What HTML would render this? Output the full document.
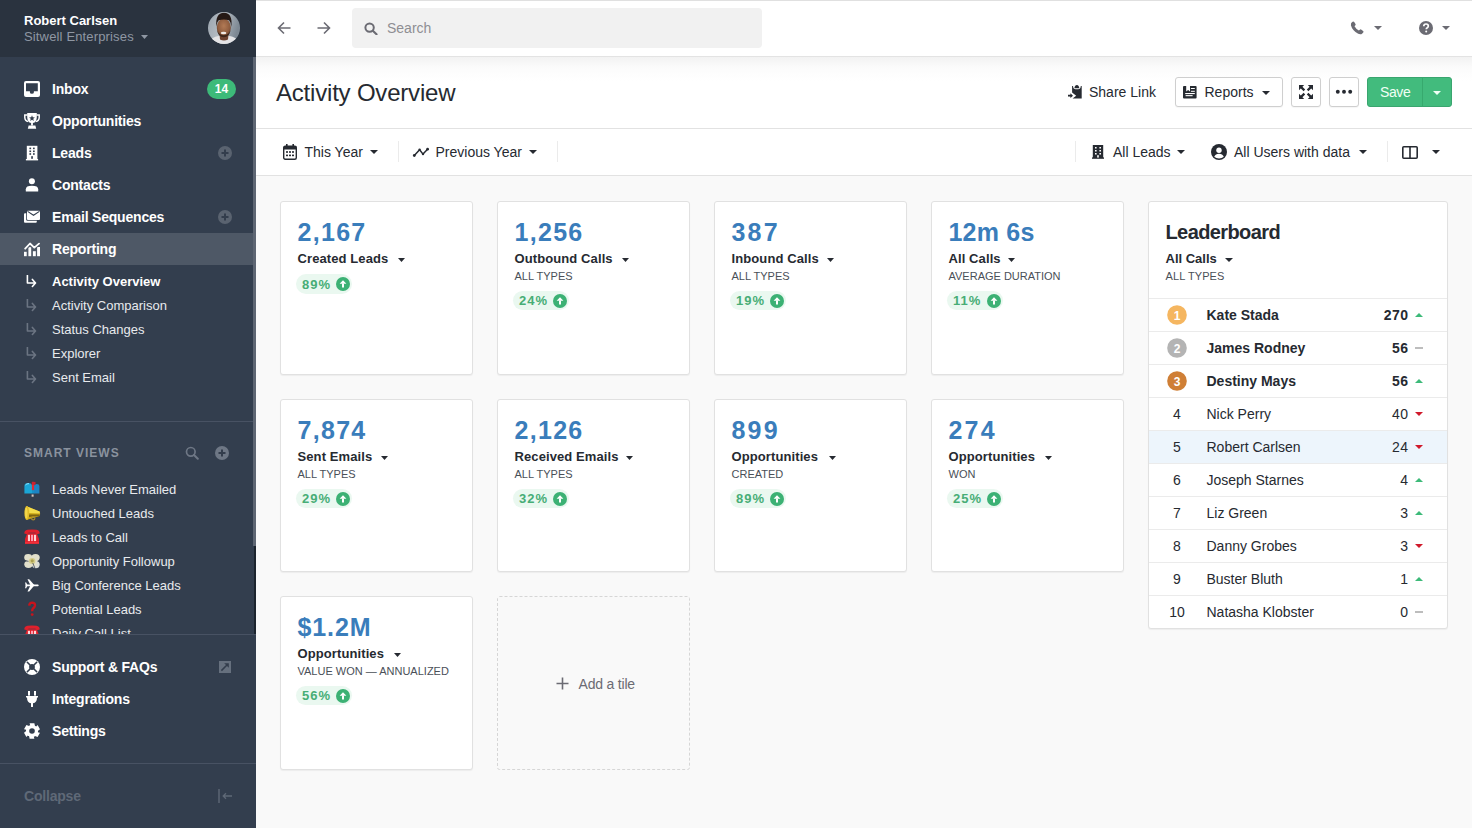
<!DOCTYPE html>
<html><head><meta charset="utf-8"><title>Activity Overview</title>
<style>
html,body{margin:0;padding:0;}
body{width:1472px;height:828px;overflow:hidden;position:relative;background:#f9f9f9;font-family:"Liberation Sans",sans-serif;-webkit-font-smoothing:antialiased;}
.t{position:absolute;white-space:nowrap;}
.r{position:absolute;display:block;}
</style></head><body>

<div class="r" style="left:0px;top:0px;width:256px;height:828px;background:#333e4e;"></div>
<div class="r" style="left:0px;top:0px;width:256px;height:57px;background:#2a333f;"></div>
<div class="t" style="left:24px;top:14.00px;font-size:13px;line-height:13px;color:#ffffff;font-weight:700;">Robert Carlsen</div>
<div class="t" style="left:24px;top:30.00px;font-size:13px;line-height:13px;color:#8f97a3;letter-spacing:0.15px;">Sitwell Enterprises</div>
<svg class="r" style="left:141px;top:35px" width="7" height="4" viewBox="0 0 7 4"><path d="M0 0H7L3.5 4Z" fill="#8f97a3"/></svg>
<svg class="r" style="left:208px;top:12px" width="32" height="32" viewBox="0 0 32 32">
<defs><clipPath id="av"><circle cx="16" cy="16" r="16"/></clipPath>
<linearGradient id="avbg" x1="0" y1="0" x2="1" y2="0.3"><stop offset="0" stop-color="#9aa4ae"/><stop offset="0.5" stop-color="#b4bcc3"/><stop offset="1" stop-color="#7d8893"/></linearGradient>
<radialGradient id="face" cx="50%" cy="40%" r="60%"><stop offset="0" stop-color="#b27a55"/><stop offset="0.7" stop-color="#8f5d3f"/><stop offset="1" stop-color="#5e3a26"/></radialGradient></defs>
<g clip-path="url(#av)">
<rect width="32" height="32" fill="url(#avbg)"/>
<path d="M0 32 C2 27 6 24.5 11 24 L21 24 C26 24.5 30 27 32 32Z" fill="#e4e4e6"/>
<path d="M11.5 22 L12 27.5 Q16 29.5 20 27.5 L20.5 22Z" fill="#6e4330"/>
<ellipse cx="15.8" cy="15.8" rx="7" ry="9.2" fill="url(#face)"/>
<path d="M8.4 15 Q7 1 16 0.8 Q25 1 23.3 15 Q22.8 9.5 21 8.2 Q16 6.6 10.8 8.2 Q9 9.5 8.4 15Z" fill="#251915"/>
<path d="M9.2 18.5 Q10 25 15.8 25.2 Q21.6 25 22.4 18.5 Q20.5 23.2 15.8 23.3 Q11.1 23.2 9.2 18.5Z" fill="#3d261a"/>
<ellipse cx="15.6" cy="21" rx="2.8" ry="1.2" fill="#efe9e4"/>
</g></svg>
<div class="r" style="left:0px;top:233px;width:253px;height:32px;background:#4e5866;"></div>
<div class="t" style="left:52px;top:82.15px;font-size:14px;line-height:14px;color:#ffffff;font-weight:700;letter-spacing:-0.2px;">Inbox</div>
<div class="t" style="left:52px;top:114.15px;font-size:14px;line-height:14px;color:#ffffff;font-weight:700;letter-spacing:-0.2px;">Opportunities</div>
<div class="t" style="left:52px;top:146.15px;font-size:14px;line-height:14px;color:#ffffff;font-weight:700;letter-spacing:-0.2px;">Leads</div>
<div class="t" style="left:52px;top:178.15px;font-size:14px;line-height:14px;color:#ffffff;font-weight:700;letter-spacing:-0.2px;">Contacts</div>
<div class="t" style="left:52px;top:210.15px;font-size:14px;line-height:14px;color:#ffffff;font-weight:700;letter-spacing:-0.2px;">Email Sequences</div>
<div class="t" style="left:52px;top:242.15px;font-size:14px;line-height:14px;color:#ffffff;font-weight:700;letter-spacing:-0.2px;">Reporting</div>
<svg class="r" style="left:24px;top:81px" width="16" height="16" viewBox="0 0 16 16"><rect x="0" y="0" width="16" height="16" rx="2" fill="#ffffff"/>
<path d="M2 2.2H13.8V10.2H9.9V11.3Q9.9 12.8 7.9 12.8Q5.9 12.8 5.9 11.3V10.2H2Z" fill="#333e4e"/></svg>
<svg class="r" style="left:24px;top:113px" width="16" height="16" viewBox="0 0 16 16"><path d="M3.2 0H12.8V4Q12.8 9.2 8.9 10.1V12.6H7.1V10.1Q3.2 9.2 3.2 4Z" fill="#ffffff"/>
<path d="M4.6 12.6H11.4L12.2 15.8H3.8Z" fill="#ffffff"/>
<path d="M3.5 1.9H0.8V4.4Q0.9 7.9 4.3 8.6" fill="none" stroke="#ffffff" stroke-width="1.5"/>
<path d="M12.5 1.9H15.2V4.4Q15.1 7.9 11.7 8.6" fill="none" stroke="#ffffff" stroke-width="1.5"/>
<path d="M8.00 2.30L8.79 4.31L10.95 4.44L9.28 5.82L9.82 7.91L8.00 6.75L6.18 7.91L6.72 5.82L5.05 4.44L7.21 4.31Z" fill="#333e4e"/></svg>
<svg class="r" style="left:24px;top:145px" width="16" height="16" viewBox="0 0 16 16"><rect x="2.8" y="0.8" width="10.6" height="14" fill="#ffffff"/>
<rect x="1.9" y="14" width="12.2" height="1.4" fill="#ffffff"/>
<rect x="5.4" y="2.6" width="1.7" height="1.6" fill="#333e4e"/><rect x="9" y="2.6" width="1.7" height="1.6" fill="#333e4e"/>
<rect x="5.4" y="5.5" width="1.7" height="1.6" fill="#333e4e"/><rect x="9" y="5.5" width="1.7" height="1.6" fill="#333e4e"/>
<rect x="5.4" y="8.2" width="1.7" height="1.6" fill="#333e4e"/><rect x="9" y="8.2" width="1.7" height="1.6" fill="#333e4e"/>
<rect x="7.2" y="11" width="1.7" height="3" rx="0.8" fill="#333e4e"/></svg>
<svg class="r" style="left:24px;top:177px" width="16" height="16" viewBox="0 0 16 16"><circle cx="7.9" cy="4.3" r="3" fill="#ffffff"/>
<path d="M1.8 14.4V12.2Q1.8 8.8 7.9 8.8Q14.2 8.8 14.2 12.2V14.4Z" fill="#ffffff"/></svg>
<svg class="r" style="left:24px;top:209px" width="16" height="16" viewBox="0 0 16 16"><rect x="0" y="4.2" width="12.8" height="9.6" rx="1" fill="#ffffff"/>
<rect x="2.2" y="0.9" width="14.6" height="10.9" rx="1.2" fill="#333e4e"/>
<rect x="3" y="1.7" width="13" height="9.3" rx="1" fill="#ffffff"/>
<path d="M3.6 2.4L9.5 6.3L15.4 2.4" fill="none" stroke="#333e4e" stroke-width="1.1"/></svg>
<svg class="r" style="left:24px;top:241px" width="16" height="16" viewBox="0 0 16 16"><rect x="0" y="10.8" width="2.7" height="4.4" fill="#ffffff"/>
<rect x="4.4" y="6.2" width="2.8" height="9" fill="#ffffff"/>
<rect x="8.9" y="10.2" width="2.9" height="5" fill="#ffffff"/>
<rect x="13.1" y="6" width="2.9" height="9.2" fill="#ffffff"/>
<path d="M1.2 7.7L6 2.5L10.3 6.6L15 2.6" fill="none" stroke="#4e5866" stroke-width="3.4" stroke-linejoin="round"/>
<path d="M1.2 7.7L6 2.5L10.3 6.6L15 2.6" fill="none" stroke="#ffffff" stroke-width="1.8" stroke-linecap="round" stroke-linejoin="round"/></svg>
<div class="r" style="left:207px;top:79px;width:29px;height:20px;background:#3dba79;border-radius:10px;"></div>
<div class="t" style="left:21.5px;width:400px;text-align:center;top:83.34px;font-size:12px;line-height:12px;color:#ffffff;font-weight:700;">14</div>
<svg class="r" style="left:218px;top:146px" width="14" height="14" viewBox="0 0 14 14"><circle cx="7" cy="7" r="7" fill="#5a6370"/><path d="M7 3.5V10.5M3.5 7H10.5" stroke="#333d4c" stroke-width="2"/></svg>
<svg class="r" style="left:218px;top:210px" width="14" height="14" viewBox="0 0 14 14"><circle cx="7" cy="7" r="7" fill="#5a6370"/><path d="M7 3.5V10.5M3.5 7H10.5" stroke="#333d4c" stroke-width="2"/></svg>
<div class="t" style="left:52px;top:275.00px;font-size:13px;line-height:13px;color:#ffffff;font-weight:700;">Activity Overview</div>
<svg class="r" style="left:26px;top:275px" width="11" height="13" viewBox="0 0 11 13"><path d="M1.4 0.4V8H9.3M6.4 4.4L9.5 8L6.4 11.5" fill="none" stroke="#ffffff" stroke-width="1.6" stroke-linecap="round" stroke-linejoin="round"/></svg>
<div class="t" style="left:52px;top:299.00px;font-size:13px;line-height:13px;color:#e8eaed;">Activity Comparison</div>
<svg class="r" style="left:26px;top:299px" width="11" height="13" viewBox="0 0 11 13"><path d="M1.4 0.4V8H9.3M6.4 4.4L9.5 8L6.4 11.5" fill="none" stroke="#6b7482" stroke-width="1.6" stroke-linecap="round" stroke-linejoin="round"/></svg>
<div class="t" style="left:52px;top:323.00px;font-size:13px;line-height:13px;color:#e8eaed;">Status Changes</div>
<svg class="r" style="left:26px;top:323px" width="11" height="13" viewBox="0 0 11 13"><path d="M1.4 0.4V8H9.3M6.4 4.4L9.5 8L6.4 11.5" fill="none" stroke="#6b7482" stroke-width="1.6" stroke-linecap="round" stroke-linejoin="round"/></svg>
<div class="t" style="left:52px;top:347.00px;font-size:13px;line-height:13px;color:#e8eaed;">Explorer</div>
<svg class="r" style="left:26px;top:347px" width="11" height="13" viewBox="0 0 11 13"><path d="M1.4 0.4V8H9.3M6.4 4.4L9.5 8L6.4 11.5" fill="none" stroke="#6b7482" stroke-width="1.6" stroke-linecap="round" stroke-linejoin="round"/></svg>
<div class="t" style="left:52px;top:371.00px;font-size:13px;line-height:13px;color:#e8eaed;">Sent Email</div>
<svg class="r" style="left:26px;top:371px" width="11" height="13" viewBox="0 0 11 13"><path d="M1.4 0.4V8H9.3M6.4 4.4L9.5 8L6.4 11.5" fill="none" stroke="#6b7482" stroke-width="1.6" stroke-linecap="round" stroke-linejoin="round"/></svg>
<div class="r" style="left:0px;top:421px;width:253px;height:1px;background:#485263;"></div>
<div class="t" style="left:24px;top:446.84px;font-size:12px;line-height:12px;color:#8a929e;font-weight:700;letter-spacing:1.0px;">SMART VIEWS</div>
<svg class="r" style="left:185px;top:446px" width="14" height="14" viewBox="0 0 14 14"><circle cx="5.8" cy="5.8" r="4.3" fill="none" stroke="#6e7785" stroke-width="1.7"/><path d="M9 9L12.8 12.8" stroke="#6e7785" stroke-width="2" stroke-linecap="round"/></svg>
<svg class="r" style="left:215px;top:446px" width="14" height="14" viewBox="0 0 14 14"><circle cx="7" cy="7" r="7" fill="#6e7785"/><path d="M7 3.5V10.5M3.5 7H10.5" stroke="#333d4c" stroke-width="2"/></svg>
<div class="r" style="left:0;top:470px;width:253px;height:164px;overflow:hidden;">
<div class="t" style="left:52px;top:13.00px;font-size:13px;line-height:13px;color:#e8eaed;">Leads Never Emailed</div>
<div class="t" style="left:52px;top:37.00px;font-size:13px;line-height:13px;color:#e8eaed;">Untouched Leads</div>
<div class="t" style="left:52px;top:61.00px;font-size:13px;line-height:13px;color:#e8eaed;">Leads to Call</div>
<div class="t" style="left:52px;top:85.00px;font-size:13px;line-height:13px;color:#e8eaed;">Opportunity Followup</div>
<div class="t" style="left:52px;top:109.00px;font-size:13px;line-height:13px;color:#e8eaed;">Big Conference Leads</div>
<div class="t" style="left:52px;top:133.00px;font-size:13px;line-height:13px;color:#e8eaed;">Potential Leads</div>
<div class="t" style="left:52px;top:157.00px;font-size:13px;line-height:13px;color:#e8eaed;">Daily Call List</div>
<svg class="r" style="left:24px;top:11px" width="16" height="16" viewBox="0 0 16 16"><path d="M0.4 5Q0.4 1.9 4.2 1.9Q8.1 1.9 8.1 5V12.5H0.4Z" fill="#1ba6d6"/><path d="M10 5Q10 2.9 12.7 2.9Q15.4 2.9 15.4 5V12.5H10Z" fill="#1d84c4"/><rect x="8" y="2.5" width="2.2" height="10" fill="#1790c8"/><path d="M1.5 4Q2.5 2.6 5 2.6" fill="none" stroke="#8fe3ff" stroke-width="1"/>
<rect x="7.9" y="0.9" width="2.2" height="8.2" fill="#de2b38"/><rect x="7.9" y="0.9" width="3.6" height="2.9" fill="#cf2030"/><rect x="7.6" y="13.5" width="2" height="2.2" fill="#d9c8bf"/></svg>
<svg class="r" style="left:24px;top:35px" width="17" height="16" viewBox="0 0 17 16"><path d="M2.6 1.2L15.6 6.6Q16.6 8.8 15.6 11L2.6 15Z" fill="#c9a415"/><path d="M2.6 1.2L15.6 6.6Q16 7.8 15.6 8.6L3 8Z" fill="#f3dc4a"/><path d="M5 9.5L15.6 9.4Q16 10.2 15.6 11L5 12Z" fill="#7d6410"/><ellipse cx="2.8" cy="8.1" rx="2.4" ry="7" fill="#e2bd2a"/><ellipse cx="2.3" cy="8.1" rx="1.2" ry="5.5" fill="#f4d74a"/><circle cx="9.2" cy="13.2" r="1.7" fill="none" stroke="#a88a2a" stroke-width="1.1"/></svg>
<svg class="r" style="left:24px;top:59px" width="16" height="16" viewBox="0 0 16 16"><path d="M0.3 4.6Q0.2 1.2 3.5 0.8Q8 0 12.5 0.8Q15.8 1.2 15.7 4.6L12.8 5.2L11.5 3.8H4.5L3.2 5.2Z" fill="#e0202c"/><path d="M3.2 4.2H12.8L15 10V14.7H1V10Z" fill="#e0202c"/><rect x="1" y="13" width="14" height="1.7" fill="#f0303a"/>
<rect x="3.9" y="5.8" width="2.1" height="6.3" fill="#ffd6d6"/><rect x="7" y="5.8" width="2.1" height="6.3" fill="#ff9fb0"/><rect x="10" y="5.8" width="2.1" height="6.3" fill="#ffd6d6"/></svg>
<svg class="r" style="left:24px;top:83px" width="16" height="16" viewBox="0 0 16 16"><g fill="#e2e0cc"><ellipse cx="4.2" cy="4.5" rx="4" ry="3.4"/><ellipse cx="11.5" cy="4.6" rx="4.2" ry="3.6"/><ellipse cx="4.5" cy="11.3" rx="4.2" ry="3.6"/><ellipse cx="11.8" cy="11.6" rx="3.9" ry="3.6" fill="#d8dcd8"/><rect x="3" y="3" width="10" height="10"/></g><ellipse cx="8.2" cy="8" rx="3.2" ry="3" fill="#d5cd8a"/><circle cx="8.2" cy="7.8" r="1.6" fill="#aaa050"/><path d="M8.8 10L11 15.5" stroke="#3a4350" stroke-width="0.8"/><path d="M0 7.6L4.5 8.3" stroke="#3a4350" stroke-width="0.8"/></svg>
<svg class="r" style="left:24px;top:108px" width="16" height="16" viewBox="0 0 16 16"><path d="M1.5 6.6Q8 6.6 14 6.6Q15.8 7.3 14 8.2H1.5Z" fill="#fff"/><path d="M6.5 7.3L3.5 13.5H5.2L10.5 7.3Z" fill="#fff"/><path d="M6.5 7.3L3.5 1.2H5.2L10.5 7.3Z" fill="#fff"/><path d="M1 4.5H2.2L3.6 7.3H1.8Z" fill="#fff"/><path d="M1 10.2H2.2L3.6 7.6H1.8Z" fill="#fff"/></svg>
<svg class="r" style="left:24px;top:131px" width="16" height="16" viewBox="0 0 16 16"><path d="M5.2 4.6Q5.5 1.6 8.2 1.6Q11.2 1.7 11 4.4Q10.8 6.3 8.9 7.6Q8.1 8.4 8.2 10.2" fill="none" stroke="#c8141c" stroke-width="2.4"/><circle cx="8.2" cy="13.6" r="1.4" fill="#c8141c"/></svg>
<svg class="r" style="left:24px;top:155px" width="16" height="16" viewBox="0 0 16 16"><path d="M0.3 4.6Q0.2 1.2 3.5 0.8Q8 0 12.5 0.8Q15.8 1.2 15.7 4.6L12.8 5.2L11.5 3.8H4.5L3.2 5.2Z" fill="#e0202c"/><path d="M3.2 4.2H12.8L15 10V14.7H1V10Z" fill="#e0202c"/><rect x="1" y="13" width="14" height="1.7" fill="#f0303a"/>
<rect x="3.9" y="5.8" width="2.1" height="6.3" fill="#ffd6d6"/><rect x="7" y="5.8" width="2.1" height="6.3" fill="#ff9fb0"/><rect x="10" y="5.8" width="2.1" height="6.3" fill="#ffd6d6"/></svg>
</div>
<div class="r" style="left:0px;top:634px;width:256px;height:1px;background:#485263;"></div>
<div class="r" style="left:253px;top:57px;width:3px;height:489px;background:#5e6673;"></div>
<div class="r" style="left:254px;top:546px;width:2px;height:88px;background:#1c242e;"></div>
<div class="t" style="left:52px;top:660.15px;font-size:14px;line-height:14px;color:#ffffff;font-weight:700;letter-spacing:-0.2px;">Support &amp; FAQs</div>
<div class="t" style="left:52px;top:692.15px;font-size:14px;line-height:14px;color:#ffffff;font-weight:700;letter-spacing:-0.2px;">Integrations</div>
<div class="t" style="left:52px;top:724.15px;font-size:14px;line-height:14px;color:#ffffff;font-weight:700;letter-spacing:-0.2px;">Settings</div>
<svg class="r" style="left:24px;top:659px" width="16" height="16" viewBox="0 0 16 16"><circle cx="8" cy="8" r="8" fill="#ffffff"/><circle cx="8" cy="8" r="2.9" fill="#333e4e"/>
<path d="M3.3 3.3L5.8 5.8M12.7 3.3L10.2 5.8M3.3 12.7L5.8 10.2M12.7 12.7L10.2 10.2" stroke="#333e4e" stroke-width="1.6" stroke-linecap="round"/></svg>
<svg class="r" style="left:24px;top:691px" width="16" height="16" viewBox="0 0 16 16"><rect x="4" y="0" width="2" height="4.6" fill="#ffffff"/><rect x="10" y="0" width="2" height="4.6" fill="#ffffff"/>
<path d="M2 5H14V6.4H13Q13 11.5 9 12.2H7Q3 11.5 3 6.4H2Z" fill="#ffffff"/><rect x="7" y="11.5" width="2" height="4.5" rx="0.6" fill="#ffffff"/></svg>
<svg class="r" style="left:24px;top:723px" width="16" height="16" viewBox="0 0 16 16"><path d="M5.60 0.16L10.40 0.16L10.90 2.98L11.96 3.76L13.59 2.00L15.99 6.16L13.80 8.00L13.65 9.30L15.99 9.84L13.59 14.00L10.90 13.02L9.70 13.55L10.40 15.84L5.60 15.84L5.10 13.02L4.04 12.24L2.41 14.00L0.01 9.84L2.20 8.00L2.35 6.70L0.01 6.16L2.41 2.00L5.10 2.98L6.30 2.45Z" fill="#ffffff"/><circle cx="8" cy="8" r="6" fill="#ffffff"/><circle cx="8" cy="8" r="2.8" fill="#333e4e"/></svg>
<svg class="r" style="left:219px;top:661px" width="12" height="12" viewBox="0 0 12 12"><rect width="12" height="12" fill="#66707e"/><path d="M2.4 9.6L8.2 3.8" stroke="#333d4c" stroke-width="1.5"/><path d="M5.2 2.2H9.8V6.8Z" fill="#333d4c"/></svg>
<div class="r" style="left:0px;top:763px;width:256px;height:1px;background:#485263;"></div>
<div class="t" style="left:24px;top:789.15px;font-size:14px;line-height:14px;color:#5f6977;font-weight:700;letter-spacing:-0.2px;">Collapse</div>
<svg class="r" style="left:218px;top:789px" width="14" height="14" viewBox="0 0 14 14"><path d="M1 0V14" stroke="#5f6977" stroke-width="1.4"/><path d="M5.2 7H14M8 4.3L5.2 7L8 9.7" fill="none" stroke="#5f6977" stroke-width="1.3"/></svg>
<div class="r" style="left:256px;top:0px;width:1216px;height:56px;background:#fff;"></div>
<div class="r" style="left:256px;top:0px;width:1216px;height:1px;background:#e0e0e0;"></div>
<div class="r" style="left:256px;top:56px;width:1216px;height:1px;background:#e3e3e3;"></div>
<svg class="r" style="left:277px;top:21px" width="14" height="14" viewBox="0 0 14 14"><path d="M13.5 7H1.5M7 1.5L1.5 7L7 12.5" fill="none" stroke="#6b6b73" stroke-width="1.6"/></svg>
<svg class="r" style="left:317px;top:21px" width="14" height="14" viewBox="0 0 14 14"><path d="M0.5 7H12.5M7 1.5L12.5 7L7 12.5" fill="none" stroke="#6b6b73" stroke-width="1.6"/></svg>
<div class="r" style="left:352px;top:8px;width:410px;height:40px;background:#f1f1f1;border-radius:4px;"></div>
<svg class="r" style="left:364px;top:22px" width="14" height="13" viewBox="0 0 14 13"><circle cx="5.6" cy="5.6" r="4.2" fill="none" stroke="#6b6b73" stroke-width="2"/><path d="M8.8 8.8L12.5 12.2" stroke="#6b6b73" stroke-width="2.2" stroke-linecap="round"/></svg>
<div class="t" style="left:387px;top:21.15px;font-size:14px;line-height:14px;color:#8e8e93;">Search</div>
<svg class="r" style="left:1350px;top:21px" width="15" height="14" viewBox="0 0 15 14"><path d="M2.6 0.8Q0.6 1.8 0.9 4.2Q2.3 9.5 8.2 12.8Q10.8 13.9 12.3 12.4L13.4 11.2Q13.9 10.5 13.1 9.9L11.1 8.5Q10.4 8.1 9.8 8.7L8.9 9.6Q6 8 4.5 5.3L5.4 4.3Q5.9 3.7 5.5 3L4.2 1Q3.6 0.3 2.6 0.8Z" fill="#6b6b73"/></svg>
<svg class="r" style="left:1374px;top:26px" width="8" height="4" viewBox="0 0 8 4"><path d="M0 0H8L4.0 4Z" fill="#6b6b73"/></svg>
<svg class="r" style="left:1419px;top:21px" width="14" height="14" viewBox="0 0 14 14"><circle cx="7" cy="7" r="7" fill="#6b6b73"/><path d="M4.8 5.3Q4.8 3 7 3Q9.3 3 9.3 5Q9.3 6.2 8 6.9Q7.3 7.3 7.3 8.2" fill="none" stroke="#fff" stroke-width="1.7"/><circle cx="7.2" cy="10.6" r="1" fill="#fff"/></svg>
<svg class="r" style="left:1442px;top:26px" width="8" height="4" viewBox="0 0 8 4"><path d="M0 0H8L4.0 4Z" fill="#6b6b73"/></svg>
<div class="r" style="left:256px;top:57px;width:1216px;height:71px;background:linear-gradient(#f2f2f2 0px,#fbfbfb 10px,#ffffff 24px);"></div>
<div class="r" style="left:256px;top:128px;width:1216px;height:1px;background:#e2e2e2;"></div>
<div class="t" style="left:276px;top:80.68px;font-size:24px;line-height:24px;color:#262a31;letter-spacing:-0.2px;">Activity Overview</div>
<svg class="r" style="left:1066px;top:84px" width="16" height="16" viewBox="0 0 16 16"><path d="M6.1 2 H7 Q7.3 5.2 9.5 5.2 H12.2 Q14.6 5.2 14.8 2 H15.7 V14.6 H6.6 L10.2 11.65 L6.1 8.5 Z" fill="#262a31"/>
<path d="M8.4 4.2 Q8.6 1 10.85 0.9 Q13.1 1 13.3 4.2 Z" fill="#262a31"/>
<path d="M2 11.65H5.2" stroke="#262a31" stroke-width="1.8"/><path d="M4.4 9.3L7 11.65L4.4 14Z" fill="#262a31"/></svg>
<div class="t" style="left:1089px;top:85.15px;font-size:14px;line-height:14px;color:#262a31;">Share Link</div>
<div class="r" style="left:1175px;top:77px;width:106px;height:28px;border:1px solid #cfcfcf;border-radius:3px;background:#fff;box-shadow:0 1px 1px rgba(0,0,0,0.04);"></div>
<svg class="r" style="left:1183px;top:86px" width="14" height="13" viewBox="0 0 14 13"><rect x="0" y="0" width="13.6" height="12.6" rx="1" fill="#262a31"/>
<path d="M3.2 0H7V5.4L5.1 4.1L3.2 5.4Z" fill="#fff"/>
<g fill="#fff"><rect x="7.9" y="2" width="3.9" height="1"/><rect x="7.9" y="4.8" width="3.9" height="1"/><rect x="2.2" y="7" width="9.6" height="1.1"/><rect x="2.6" y="9.1" width="7" height="1.1"/></g></svg>
<div class="t" style="left:1204.5px;top:85.15px;font-size:14px;line-height:14px;color:#262a31;">Reports</div>
<svg class="r" style="left:1262px;top:91px" width="8" height="4" viewBox="0 0 8 4"><path d="M0 0H8L4.0 4Z" fill="#262a31"/></svg>
<div class="r" style="left:1291px;top:77px;width:28px;height:28px;border:1px solid #cfcfcf;border-radius:3px;background:#fff;box-shadow:0 1px 1px rgba(0,0,0,0.04);"></div>
<svg class="r" style="left:1299px;top:85px" width="14" height="14" viewBox="0 0 14 14"><path d="M1.6 1.6L5.4 5.4M12.4 1.6L8.6 5.4M1.6 12.4L5.4 8.6M12.4 12.4L8.6 8.6" stroke="#262a31" stroke-width="2.2"/>
<path d="M0 0H5.2L0 5.2Z M14 0H8.8L14 5.2Z M0 14H5.2L0 8.8Z M14 14H8.8L14 8.8Z" fill="#262a31"/></svg>
<div class="r" style="left:1329px;top:77px;width:28px;height:28px;border:1px solid #cfcfcf;border-radius:3px;background:#fff;box-shadow:0 1px 1px rgba(0,0,0,0.04);"></div>
<svg class="r" style="left:1335px;top:89px" width="18" height="5" viewBox="0 0 18 5"><circle cx="2.8" cy="2.7" r="1.95" fill="#262a31"/><circle cx="9" cy="2.7" r="1.95" fill="#262a31"/><circle cx="15.2" cy="2.7" r="1.95" fill="#262a31"/></svg>
<div class="r" style="left:1367px;top:77px;width:83px;height:28px;background:#42bb7d;border:1px solid #3aa56f;border-radius:3px;"></div>
<div class="r" style="left:1422px;top:77px;width:1px;height:30px;background:#37a96e;"></div>
<div class="t" style="left:1380px;top:85.15px;font-size:14px;line-height:14px;color:#f0fff5;letter-spacing:-0.4px;">Save</div>
<svg class="r" style="left:1433px;top:91px" width="8" height="4" viewBox="0 0 8 4"><path d="M0 0H8L4.0 4Z" fill="#f0fff5"/></svg>
<div class="r" style="left:256px;top:129px;width:1216px;height:46px;background:#fff;"></div>
<div class="r" style="left:256px;top:175px;width:1216px;height:1px;background:#e2e2e2;"></div>
<svg class="r" style="left:283px;top:144px" width="14" height="16" viewBox="0 0 14 16"><rect x="0.7" y="2.3" width="12.6" height="13" rx="1.5" fill="none" stroke="#262a31" stroke-width="1.4"/>
<rect x="0.7" y="2.3" width="12.6" height="3.2" fill="#262a31"/><rect x="3" y="0" width="1.6" height="3.5" fill="#262a31"/><rect x="9.4" y="0" width="1.6" height="3.5" fill="#262a31"/>
<g fill="#262a31"><rect x="3" y="7.2" width="2" height="1.6"/><rect x="6" y="7.2" width="2" height="1.6"/><rect x="9" y="7.2" width="2" height="1.6"/>
<rect x="3" y="10.6" width="2" height="1.6"/><rect x="6" y="10.6" width="2" height="1.6"/><rect x="9" y="10.6" width="2" height="1.6"/></g></svg>
<div class="t" style="left:304.5px;top:145.15px;font-size:14px;line-height:14px;color:#262a31;">This Year</div>
<svg class="r" style="left:370px;top:150px" width="8" height="4" viewBox="0 0 8 4"><path d="M0 0H8L4.0 4Z" fill="#262a31"/></svg>
<div class="r" style="left:398px;top:141px;width:1px;height:21px;background:#ebebeb;"></div>
<svg class="r" style="left:412px;top:146px" width="18" height="12" viewBox="0 0 18 12"><path d="M2.3 9.5L7.6 3.7L11 8.1L15.6 3.2" fill="none" stroke="#262a31" stroke-width="1.5" stroke-linejoin="round"/><g fill="#262a31"><circle cx="2.3" cy="9.5" r="1.4"/><circle cx="7.6" cy="3.8" r="1.2"/><circle cx="11" cy="8.1" r="1.2"/><circle cx="15.6" cy="3.2" r="1.4"/></g></svg>
<div class="t" style="left:435.5px;top:145.15px;font-size:14px;line-height:14px;color:#262a31;">Previous Year</div>
<svg class="r" style="left:529px;top:150px" width="8" height="4" viewBox="0 0 8 4"><path d="M0 0H8L4.0 4Z" fill="#262a31"/></svg>
<div class="r" style="left:557px;top:141px;width:1px;height:21px;background:#ebebeb;"></div>
<div class="r" style="left:1075px;top:141px;width:1px;height:21px;background:#ebebeb;"></div>
<svg class="r" style="left:1092px;top:145px" width="12" height="15" viewBox="0 0 12 15"><rect x="0.8" y="0" width="10.4" height="13" fill="#262a31"/><rect x="0" y="12.4" width="12" height="1.4" fill="#262a31"/>
<g fill="#fff"><rect x="3" y="2" width="1.6" height="1.5"/><rect x="7.4" y="2" width="1.6" height="1.5"/><rect x="3" y="5" width="1.6" height="1.5"/><rect x="7.4" y="5" width="1.6" height="1.5"/><rect x="3" y="8" width="1.6" height="1.5"/><rect x="7.4" y="8" width="1.6" height="1.5"/><rect x="5.2" y="10.2" width="1.6" height="2.4"/></g></svg>
<div class="t" style="left:1113px;top:145.15px;font-size:14px;line-height:14px;color:#262a31;">All Leads</div>
<svg class="r" style="left:1177px;top:150px" width="8" height="4" viewBox="0 0 8 4"><path d="M0 0H8L4.0 4Z" fill="#262a31"/></svg>
<svg class="r" style="left:1211px;top:144px" width="16" height="16" viewBox="0 0 16 16"><circle cx="8" cy="8" r="8" fill="#262a31"/><circle cx="8" cy="6.2" r="2.7" fill="#fff"/><path d="M3.2 12.8Q4.5 9.8 8 9.8Q11.5 9.8 12.8 12.8Q10.8 14.6 8 14.6Q5.2 14.6 3.2 12.8Z" fill="#fff"/></svg>
<div class="t" style="left:1234px;top:145.15px;font-size:14px;line-height:14px;color:#262a31;">All Users with data</div>
<svg class="r" style="left:1359px;top:150px" width="8" height="4" viewBox="0 0 8 4"><path d="M0 0H8L4.0 4Z" fill="#262a31"/></svg>
<div class="r" style="left:1387px;top:141px;width:1px;height:21px;background:#ebebeb;"></div>
<svg class="r" style="left:1402px;top:146px" width="16" height="13" viewBox="0 0 16 13"><rect x="0.8" y="0.8" width="14.4" height="11.4" rx="1" fill="none" stroke="#262a31" stroke-width="1.6"/><rect x="7.2" y="0.8" width="1.6" height="11.4" fill="#262a31"/></svg>
<svg class="r" style="left:1432px;top:150px" width="8" height="4" viewBox="0 0 8 4"><path d="M0 0H8L4.0 4Z" fill="#262a31"/></svg>
<div class="r" style="left:280px;top:201px;width:191px;height:172px;background:#fff;border:1px solid #e1e1e1;border-radius:3px;box-shadow:0 1px 1px rgba(0,0,0,0.05);"></div>
<div class="t" style="left:297.5px;top:219.84px;font-size:25px;line-height:25px;color:#3a7dbb;font-weight:700;letter-spacing:1.3px;">2,167</div>
<div class="t" style="left:297.5px;top:252.00px;font-size:13px;line-height:13px;color:#262a31;font-weight:700;letter-spacing:0.1px;">Created Leads</div>
<svg class="r" style="left:398px;top:258.3px" width="7" height="4" viewBox="0 0 7 4"><path d="M0 0H7L3.5 4Z" fill="#262a31"/></svg>
<div class="r" style="left:296px;top:274px;width:56px;height:19.5px;background:#eaf8f0;border-radius:10px;"></div>
<div class="t" style="left:302px;top:277.50px;font-size:13px;line-height:13px;color:#47ad76;font-weight:700;letter-spacing:1.0px;">89%</div>
<svg class="r" style="left:336px;top:277px" width="14" height="14" viewBox="0 0 14 14"><circle cx="7" cy="7" r="7" fill="#3cb174"/><path d="M7 3.2L3.6 6.8H10.4Z" fill="#fff"/><rect x="6" y="6.5" width="2" height="4" fill="#fff"/></svg>
<div class="r" style="left:497px;top:201px;width:191px;height:172px;background:#fff;border:1px solid #e1e1e1;border-radius:3px;box-shadow:0 1px 1px rgba(0,0,0,0.05);"></div>
<div class="t" style="left:514.5px;top:219.84px;font-size:25px;line-height:25px;color:#3a7dbb;font-weight:700;letter-spacing:1.3px;">1,256</div>
<div class="t" style="left:514.5px;top:252.00px;font-size:13px;line-height:13px;color:#262a31;font-weight:700;letter-spacing:0.1px;">Outbound Calls</div>
<svg class="r" style="left:621.5px;top:258.3px" width="7" height="4" viewBox="0 0 7 4"><path d="M0 0H7L3.5 4Z" fill="#262a31"/></svg>
<div class="t" style="left:514.5px;top:270.69px;font-size:11px;line-height:11px;color:#4a4f57;">ALL TYPES</div>
<div class="r" style="left:513px;top:290.5px;width:56px;height:19.5px;background:#eaf8f0;border-radius:10px;"></div>
<div class="t" style="left:519px;top:294.00px;font-size:13px;line-height:13px;color:#47ad76;font-weight:700;letter-spacing:1.0px;">24%</div>
<svg class="r" style="left:553px;top:293.5px" width="14" height="14" viewBox="0 0 14 14"><circle cx="7" cy="7" r="7" fill="#3cb174"/><path d="M7 3.2L3.6 6.8H10.4Z" fill="#fff"/><rect x="6" y="6.5" width="2" height="4" fill="#fff"/></svg>
<div class="r" style="left:714px;top:201px;width:191px;height:172px;background:#fff;border:1px solid #e1e1e1;border-radius:3px;box-shadow:0 1px 1px rgba(0,0,0,0.05);"></div>
<div class="t" style="left:731.5px;top:219.84px;font-size:25px;line-height:25px;color:#3a7dbb;font-weight:700;letter-spacing:2.2px;">387</div>
<div class="t" style="left:731.5px;top:252.00px;font-size:13px;line-height:13px;color:#262a31;font-weight:700;letter-spacing:0.1px;">Inbound Calls</div>
<svg class="r" style="left:827px;top:258.3px" width="7" height="4" viewBox="0 0 7 4"><path d="M0 0H7L3.5 4Z" fill="#262a31"/></svg>
<div class="t" style="left:731.5px;top:270.69px;font-size:11px;line-height:11px;color:#4a4f57;">ALL TYPES</div>
<div class="r" style="left:730px;top:290.5px;width:56px;height:19.5px;background:#eaf8f0;border-radius:10px;"></div>
<div class="t" style="left:736px;top:294.00px;font-size:13px;line-height:13px;color:#47ad76;font-weight:700;letter-spacing:1.0px;">19%</div>
<svg class="r" style="left:770px;top:293.5px" width="14" height="14" viewBox="0 0 14 14"><circle cx="7" cy="7" r="7" fill="#3cb174"/><path d="M7 3.2L3.6 6.8H10.4Z" fill="#fff"/><rect x="6" y="6.5" width="2" height="4" fill="#fff"/></svg>
<div class="r" style="left:931px;top:201px;width:191px;height:172px;background:#fff;border:1px solid #e1e1e1;border-radius:3px;box-shadow:0 1px 1px rgba(0,0,0,0.05);"></div>
<div class="t" style="left:948.5px;top:219.84px;font-size:25px;line-height:25px;color:#3a7dbb;font-weight:700;letter-spacing:0.2px;">12m 6s</div>
<div class="t" style="left:948.5px;top:252.00px;font-size:13px;line-height:13px;color:#262a31;font-weight:700;letter-spacing:0.1px;">All Calls</div>
<svg class="r" style="left:1008px;top:258.3px" width="7" height="4" viewBox="0 0 7 4"><path d="M0 0H7L3.5 4Z" fill="#262a31"/></svg>
<div class="t" style="left:948.5px;top:270.69px;font-size:11px;line-height:11px;color:#4a4f57;">AVERAGE DURATION</div>
<div class="r" style="left:947px;top:290.5px;width:56px;height:19.5px;background:#eaf8f0;border-radius:10px;"></div>
<div class="t" style="left:953px;top:294.00px;font-size:13px;line-height:13px;color:#47ad76;font-weight:700;letter-spacing:1.0px;">11%</div>
<svg class="r" style="left:987px;top:293.5px" width="14" height="14" viewBox="0 0 14 14"><circle cx="7" cy="7" r="7" fill="#3cb174"/><path d="M7 3.2L3.6 6.8H10.4Z" fill="#fff"/><rect x="6" y="6.5" width="2" height="4" fill="#fff"/></svg>
<div class="r" style="left:280px;top:399px;width:191px;height:171px;background:#fff;border:1px solid #e1e1e1;border-radius:3px;box-shadow:0 1px 1px rgba(0,0,0,0.05);"></div>
<div class="t" style="left:297.5px;top:417.84px;font-size:25px;line-height:25px;color:#3a7dbb;font-weight:700;letter-spacing:1.3px;">7,874</div>
<div class="t" style="left:297.5px;top:450.00px;font-size:13px;line-height:13px;color:#262a31;font-weight:700;letter-spacing:0.1px;">Sent Emails</div>
<svg class="r" style="left:381px;top:456.3px" width="7" height="4" viewBox="0 0 7 4"><path d="M0 0H7L3.5 4Z" fill="#262a31"/></svg>
<div class="t" style="left:297.5px;top:468.69px;font-size:11px;line-height:11px;color:#4a4f57;">ALL TYPES</div>
<div class="r" style="left:296px;top:488.5px;width:56px;height:19.5px;background:#eaf8f0;border-radius:10px;"></div>
<div class="t" style="left:302px;top:492.00px;font-size:13px;line-height:13px;color:#47ad76;font-weight:700;letter-spacing:1.0px;">29%</div>
<svg class="r" style="left:336px;top:491.5px" width="14" height="14" viewBox="0 0 14 14"><circle cx="7" cy="7" r="7" fill="#3cb174"/><path d="M7 3.2L3.6 6.8H10.4Z" fill="#fff"/><rect x="6" y="6.5" width="2" height="4" fill="#fff"/></svg>
<div class="r" style="left:497px;top:399px;width:191px;height:171px;background:#fff;border:1px solid #e1e1e1;border-radius:3px;box-shadow:0 1px 1px rgba(0,0,0,0.05);"></div>
<div class="t" style="left:514.5px;top:417.84px;font-size:25px;line-height:25px;color:#3a7dbb;font-weight:700;letter-spacing:1.3px;">2,126</div>
<div class="t" style="left:514.5px;top:450.00px;font-size:13px;line-height:13px;color:#262a31;font-weight:700;letter-spacing:0.1px;">Received Emails</div>
<svg class="r" style="left:626px;top:456.3px" width="7" height="4" viewBox="0 0 7 4"><path d="M0 0H7L3.5 4Z" fill="#262a31"/></svg>
<div class="t" style="left:514.5px;top:468.69px;font-size:11px;line-height:11px;color:#4a4f57;">ALL TYPES</div>
<div class="r" style="left:513px;top:488.5px;width:56px;height:19.5px;background:#eaf8f0;border-radius:10px;"></div>
<div class="t" style="left:519px;top:492.00px;font-size:13px;line-height:13px;color:#47ad76;font-weight:700;letter-spacing:1.0px;">32%</div>
<svg class="r" style="left:553px;top:491.5px" width="14" height="14" viewBox="0 0 14 14"><circle cx="7" cy="7" r="7" fill="#3cb174"/><path d="M7 3.2L3.6 6.8H10.4Z" fill="#fff"/><rect x="6" y="6.5" width="2" height="4" fill="#fff"/></svg>
<div class="r" style="left:714px;top:399px;width:191px;height:171px;background:#fff;border:1px solid #e1e1e1;border-radius:3px;box-shadow:0 1px 1px rgba(0,0,0,0.05);"></div>
<div class="t" style="left:731.5px;top:417.84px;font-size:25px;line-height:25px;color:#3a7dbb;font-weight:700;letter-spacing:2.2px;">899</div>
<div class="t" style="left:731.5px;top:450.00px;font-size:13px;line-height:13px;color:#262a31;font-weight:700;letter-spacing:0.1px;">Opportunities</div>
<svg class="r" style="left:829px;top:456.3px" width="7" height="4" viewBox="0 0 7 4"><path d="M0 0H7L3.5 4Z" fill="#262a31"/></svg>
<div class="t" style="left:731.5px;top:468.69px;font-size:11px;line-height:11px;color:#4a4f57;">CREATED</div>
<div class="r" style="left:730px;top:488.5px;width:56px;height:19.5px;background:#eaf8f0;border-radius:10px;"></div>
<div class="t" style="left:736px;top:492.00px;font-size:13px;line-height:13px;color:#47ad76;font-weight:700;letter-spacing:1.0px;">89%</div>
<svg class="r" style="left:770px;top:491.5px" width="14" height="14" viewBox="0 0 14 14"><circle cx="7" cy="7" r="7" fill="#3cb174"/><path d="M7 3.2L3.6 6.8H10.4Z" fill="#fff"/><rect x="6" y="6.5" width="2" height="4" fill="#fff"/></svg>
<div class="r" style="left:931px;top:399px;width:191px;height:171px;background:#fff;border:1px solid #e1e1e1;border-radius:3px;box-shadow:0 1px 1px rgba(0,0,0,0.05);"></div>
<div class="t" style="left:948.5px;top:417.84px;font-size:25px;line-height:25px;color:#3a7dbb;font-weight:700;letter-spacing:2.2px;">274</div>
<div class="t" style="left:948.5px;top:450.00px;font-size:13px;line-height:13px;color:#262a31;font-weight:700;letter-spacing:0.1px;">Opportunities</div>
<svg class="r" style="left:1045px;top:456.3px" width="7" height="4" viewBox="0 0 7 4"><path d="M0 0H7L3.5 4Z" fill="#262a31"/></svg>
<div class="t" style="left:948.5px;top:468.69px;font-size:11px;line-height:11px;color:#4a4f57;">WON</div>
<div class="r" style="left:947px;top:488.5px;width:56px;height:19.5px;background:#eaf8f0;border-radius:10px;"></div>
<div class="t" style="left:953px;top:492.00px;font-size:13px;line-height:13px;color:#47ad76;font-weight:700;letter-spacing:1.0px;">25%</div>
<svg class="r" style="left:987px;top:491.5px" width="14" height="14" viewBox="0 0 14 14"><circle cx="7" cy="7" r="7" fill="#3cb174"/><path d="M7 3.2L3.6 6.8H10.4Z" fill="#fff"/><rect x="6" y="6.5" width="2" height="4" fill="#fff"/></svg>
<div class="r" style="left:280px;top:596px;width:191px;height:172px;background:#fff;border:1px solid #e1e1e1;border-radius:3px;box-shadow:0 1px 1px rgba(0,0,0,0.05);"></div>
<div class="t" style="left:297.5px;top:614.84px;font-size:25px;line-height:25px;color:#3a7dbb;font-weight:700;letter-spacing:0.9px;">$1.2M</div>
<div class="t" style="left:297.5px;top:647.00px;font-size:13px;line-height:13px;color:#262a31;font-weight:700;letter-spacing:0.1px;">Opportunities</div>
<svg class="r" style="left:394px;top:653.3px" width="7" height="4" viewBox="0 0 7 4"><path d="M0 0H7L3.5 4Z" fill="#262a31"/></svg>
<div class="t" style="left:297.5px;top:665.69px;font-size:11px;line-height:11px;color:#4a4f57;">VALUE WON — ANNUALIZED</div>
<div class="r" style="left:296px;top:685.5px;width:56px;height:19.5px;background:#eaf8f0;border-radius:10px;"></div>
<div class="t" style="left:302px;top:689.00px;font-size:13px;line-height:13px;color:#47ad76;font-weight:700;letter-spacing:1.0px;">56%</div>
<svg class="r" style="left:336px;top:688.5px" width="14" height="14" viewBox="0 0 14 14"><circle cx="7" cy="7" r="7" fill="#3cb174"/><path d="M7 3.2L3.6 6.8H10.4Z" fill="#fff"/><rect x="6" y="6.5" width="2" height="4" fill="#fff"/></svg>
<svg class="r" style="left:497px;top:596px" width="193" height="174" viewBox="0 0 193 174"><rect x="0.5" y="0.5" width="192" height="173" rx="2" fill="none" stroke="#d6d6d6" stroke-dasharray="3 2"/></svg>
<svg class="r" style="left:556px;top:677px" width="13" height="13" viewBox="0 0 13 13"><path d="M6.5 0.5V12.5M0.5 6.5H12.5" stroke="#6b6b73" stroke-width="1.6"/></svg>
<div class="t" style="left:578.5px;top:676.65px;font-size:14px;line-height:14px;color:#6b6b73;letter-spacing:-0.2px;">Add a tile</div>
<div class="r" style="left:1148px;top:201px;width:298px;height:426px;background:#fff;border:1px solid #e1e1e1;border-radius:3px;box-shadow:0 1px 1px rgba(0,0,0,0.05);"></div>
<div class="t" style="left:1165.5px;top:222.07px;font-size:20px;line-height:20px;color:#262a31;font-weight:700;letter-spacing:-0.6px;">Leaderboard</div>
<div class="t" style="left:1165.5px;top:252.00px;font-size:13px;line-height:13px;color:#262a31;font-weight:700;">All Calls</div>
<svg class="r" style="left:1225px;top:258px" width="8" height="4" viewBox="0 0 8 4"><path d="M0 0H8L4.0 4Z" fill="#262a31"/></svg>
<div class="t" style="left:1165.5px;top:270.69px;font-size:11px;line-height:11px;color:#4a4f57;letter-spacing:0.1px;">ALL TYPES</div>
<div class="r" style="left:1149px;top:298px;width:298px;height:1px;background:#ebebeb;"></div>
<svg class="r" style="left:1167px;top:304.5px" width="20" height="20" viewBox="0 0 20 20"><circle cx="10" cy="10" r="9.8" fill="#f5b660"/></svg>
<div class="t" style="left:977px;width:400px;text-align:center;top:310.04px;font-size:12px;line-height:12px;color:#fff;font-weight:700;">1</div>
<div class="t" style="left:1206.5px;top:308.15px;font-size:14px;line-height:14px;color:#262a31;font-weight:700;">Kate Stada</div>
<div class="t" style="left:1008.5px;width:400px;text-align:right;top:308.15px;font-size:14px;line-height:14px;color:#262a31;font-weight:700;letter-spacing:0.5px;">270</div>
<svg class="r" style="left:1415px;top:313px" width="8" height="4" viewBox="0 0 8 4"><path d="M0 4H8L4 0Z" fill="#3dba79"/></svg>
<div class="r" style="left:1149px;top:331px;width:298px;height:1px;background:#ebebeb;"></div>
<svg class="r" style="left:1167px;top:337.5px" width="20" height="20" viewBox="0 0 20 20"><circle cx="10" cy="10" r="9.8" fill="#b4b4b4"/></svg>
<div class="t" style="left:977px;width:400px;text-align:center;top:343.04px;font-size:12px;line-height:12px;color:#fff;font-weight:700;">2</div>
<div class="t" style="left:1206.5px;top:341.15px;font-size:14px;line-height:14px;color:#262a31;font-weight:700;">James Rodney</div>
<div class="t" style="left:1008.5px;width:400px;text-align:right;top:341.15px;font-size:14px;line-height:14px;color:#262a31;font-weight:700;letter-spacing:0.5px;">56</div>
<div class="r" style="left:1415px;top:347px;width:8px;height:2px;background:#bdbdbd;"></div>
<div class="r" style="left:1149px;top:364px;width:298px;height:1px;background:#ebebeb;"></div>
<svg class="r" style="left:1167px;top:370.5px" width="20" height="20" viewBox="0 0 20 20"><circle cx="10" cy="10" r="9.8" fill="#cf7f36"/></svg>
<div class="t" style="left:977px;width:400px;text-align:center;top:376.04px;font-size:12px;line-height:12px;color:#fff;font-weight:700;">3</div>
<div class="t" style="left:1206.5px;top:374.15px;font-size:14px;line-height:14px;color:#262a31;font-weight:700;">Destiny Mays</div>
<div class="t" style="left:1008.5px;width:400px;text-align:right;top:374.15px;font-size:14px;line-height:14px;color:#262a31;font-weight:700;letter-spacing:0.5px;">56</div>
<svg class="r" style="left:1415px;top:379px" width="8" height="4" viewBox="0 0 8 4"><path d="M0 4H8L4 0Z" fill="#3dba79"/></svg>
<div class="r" style="left:1149px;top:397px;width:298px;height:1px;background:#ebebeb;"></div>
<div class="t" style="left:977px;width:400px;text-align:center;top:407.15px;font-size:14px;line-height:14px;color:#262a31;">4</div>
<div class="t" style="left:1206.5px;top:407.15px;font-size:14px;line-height:14px;color:#262a31;">Nick Perry</div>
<div class="t" style="left:1008.5px;width:400px;text-align:right;top:407.15px;font-size:14px;line-height:14px;color:#262a31;letter-spacing:0.5px;">40</div>
<svg class="r" style="left:1415px;top:412px" width="8" height="4" viewBox="0 0 8 4"><path d="M0 0H8L4 4Z" fill="#d0192b"/></svg>
<div class="r" style="left:1149px;top:430px;width:298px;height:1px;background:#ebebeb;"></div>
<div class="r" style="left:1149px;top:431px;width:298px;height:32px;background:#edf5fc;"></div>
<div class="t" style="left:977px;width:400px;text-align:center;top:440.15px;font-size:14px;line-height:14px;color:#262a31;">5</div>
<div class="t" style="left:1206.5px;top:440.15px;font-size:14px;line-height:14px;color:#262a31;">Robert Carlsen</div>
<div class="t" style="left:1008.5px;width:400px;text-align:right;top:440.15px;font-size:14px;line-height:14px;color:#262a31;letter-spacing:0.5px;">24</div>
<svg class="r" style="left:1415px;top:445px" width="8" height="4" viewBox="0 0 8 4"><path d="M0 0H8L4 4Z" fill="#d0192b"/></svg>
<div class="r" style="left:1149px;top:463px;width:298px;height:1px;background:#ebebeb;"></div>
<div class="t" style="left:977px;width:400px;text-align:center;top:473.15px;font-size:14px;line-height:14px;color:#262a31;">6</div>
<div class="t" style="left:1206.5px;top:473.15px;font-size:14px;line-height:14px;color:#262a31;">Joseph Starnes</div>
<div class="t" style="left:1008.5px;width:400px;text-align:right;top:473.15px;font-size:14px;line-height:14px;color:#262a31;letter-spacing:0.5px;">4</div>
<svg class="r" style="left:1415px;top:478px" width="8" height="4" viewBox="0 0 8 4"><path d="M0 4H8L4 0Z" fill="#3dba79"/></svg>
<div class="r" style="left:1149px;top:496px;width:298px;height:1px;background:#ebebeb;"></div>
<div class="t" style="left:977px;width:400px;text-align:center;top:506.15px;font-size:14px;line-height:14px;color:#262a31;">7</div>
<div class="t" style="left:1206.5px;top:506.15px;font-size:14px;line-height:14px;color:#262a31;">Liz Green</div>
<div class="t" style="left:1008.5px;width:400px;text-align:right;top:506.15px;font-size:14px;line-height:14px;color:#262a31;letter-spacing:0.5px;">3</div>
<svg class="r" style="left:1415px;top:511px" width="8" height="4" viewBox="0 0 8 4"><path d="M0 4H8L4 0Z" fill="#3dba79"/></svg>
<div class="r" style="left:1149px;top:529px;width:298px;height:1px;background:#ebebeb;"></div>
<div class="t" style="left:977px;width:400px;text-align:center;top:539.15px;font-size:14px;line-height:14px;color:#262a31;">8</div>
<div class="t" style="left:1206.5px;top:539.15px;font-size:14px;line-height:14px;color:#262a31;">Danny Grobes</div>
<div class="t" style="left:1008.5px;width:400px;text-align:right;top:539.15px;font-size:14px;line-height:14px;color:#262a31;letter-spacing:0.5px;">3</div>
<svg class="r" style="left:1415px;top:544px" width="8" height="4" viewBox="0 0 8 4"><path d="M0 0H8L4 4Z" fill="#d0192b"/></svg>
<div class="r" style="left:1149px;top:562px;width:298px;height:1px;background:#ebebeb;"></div>
<div class="t" style="left:977px;width:400px;text-align:center;top:572.15px;font-size:14px;line-height:14px;color:#262a31;">9</div>
<div class="t" style="left:1206.5px;top:572.15px;font-size:14px;line-height:14px;color:#262a31;">Buster Bluth</div>
<div class="t" style="left:1008.5px;width:400px;text-align:right;top:572.15px;font-size:14px;line-height:14px;color:#262a31;letter-spacing:0.5px;">1</div>
<svg class="r" style="left:1415px;top:577px" width="8" height="4" viewBox="0 0 8 4"><path d="M0 4H8L4 0Z" fill="#3dba79"/></svg>
<div class="r" style="left:1149px;top:595px;width:298px;height:1px;background:#ebebeb;"></div>
<div class="t" style="left:977px;width:400px;text-align:center;top:605.15px;font-size:14px;line-height:14px;color:#262a31;">10</div>
<div class="t" style="left:1206.5px;top:605.15px;font-size:14px;line-height:14px;color:#262a31;">Natasha Klobster</div>
<div class="t" style="left:1008.5px;width:400px;text-align:right;top:605.15px;font-size:14px;line-height:14px;color:#262a31;letter-spacing:0.5px;">0</div>
<div class="r" style="left:1415px;top:611px;width:8px;height:2px;background:#bdbdbd;"></div>
</body></html>
